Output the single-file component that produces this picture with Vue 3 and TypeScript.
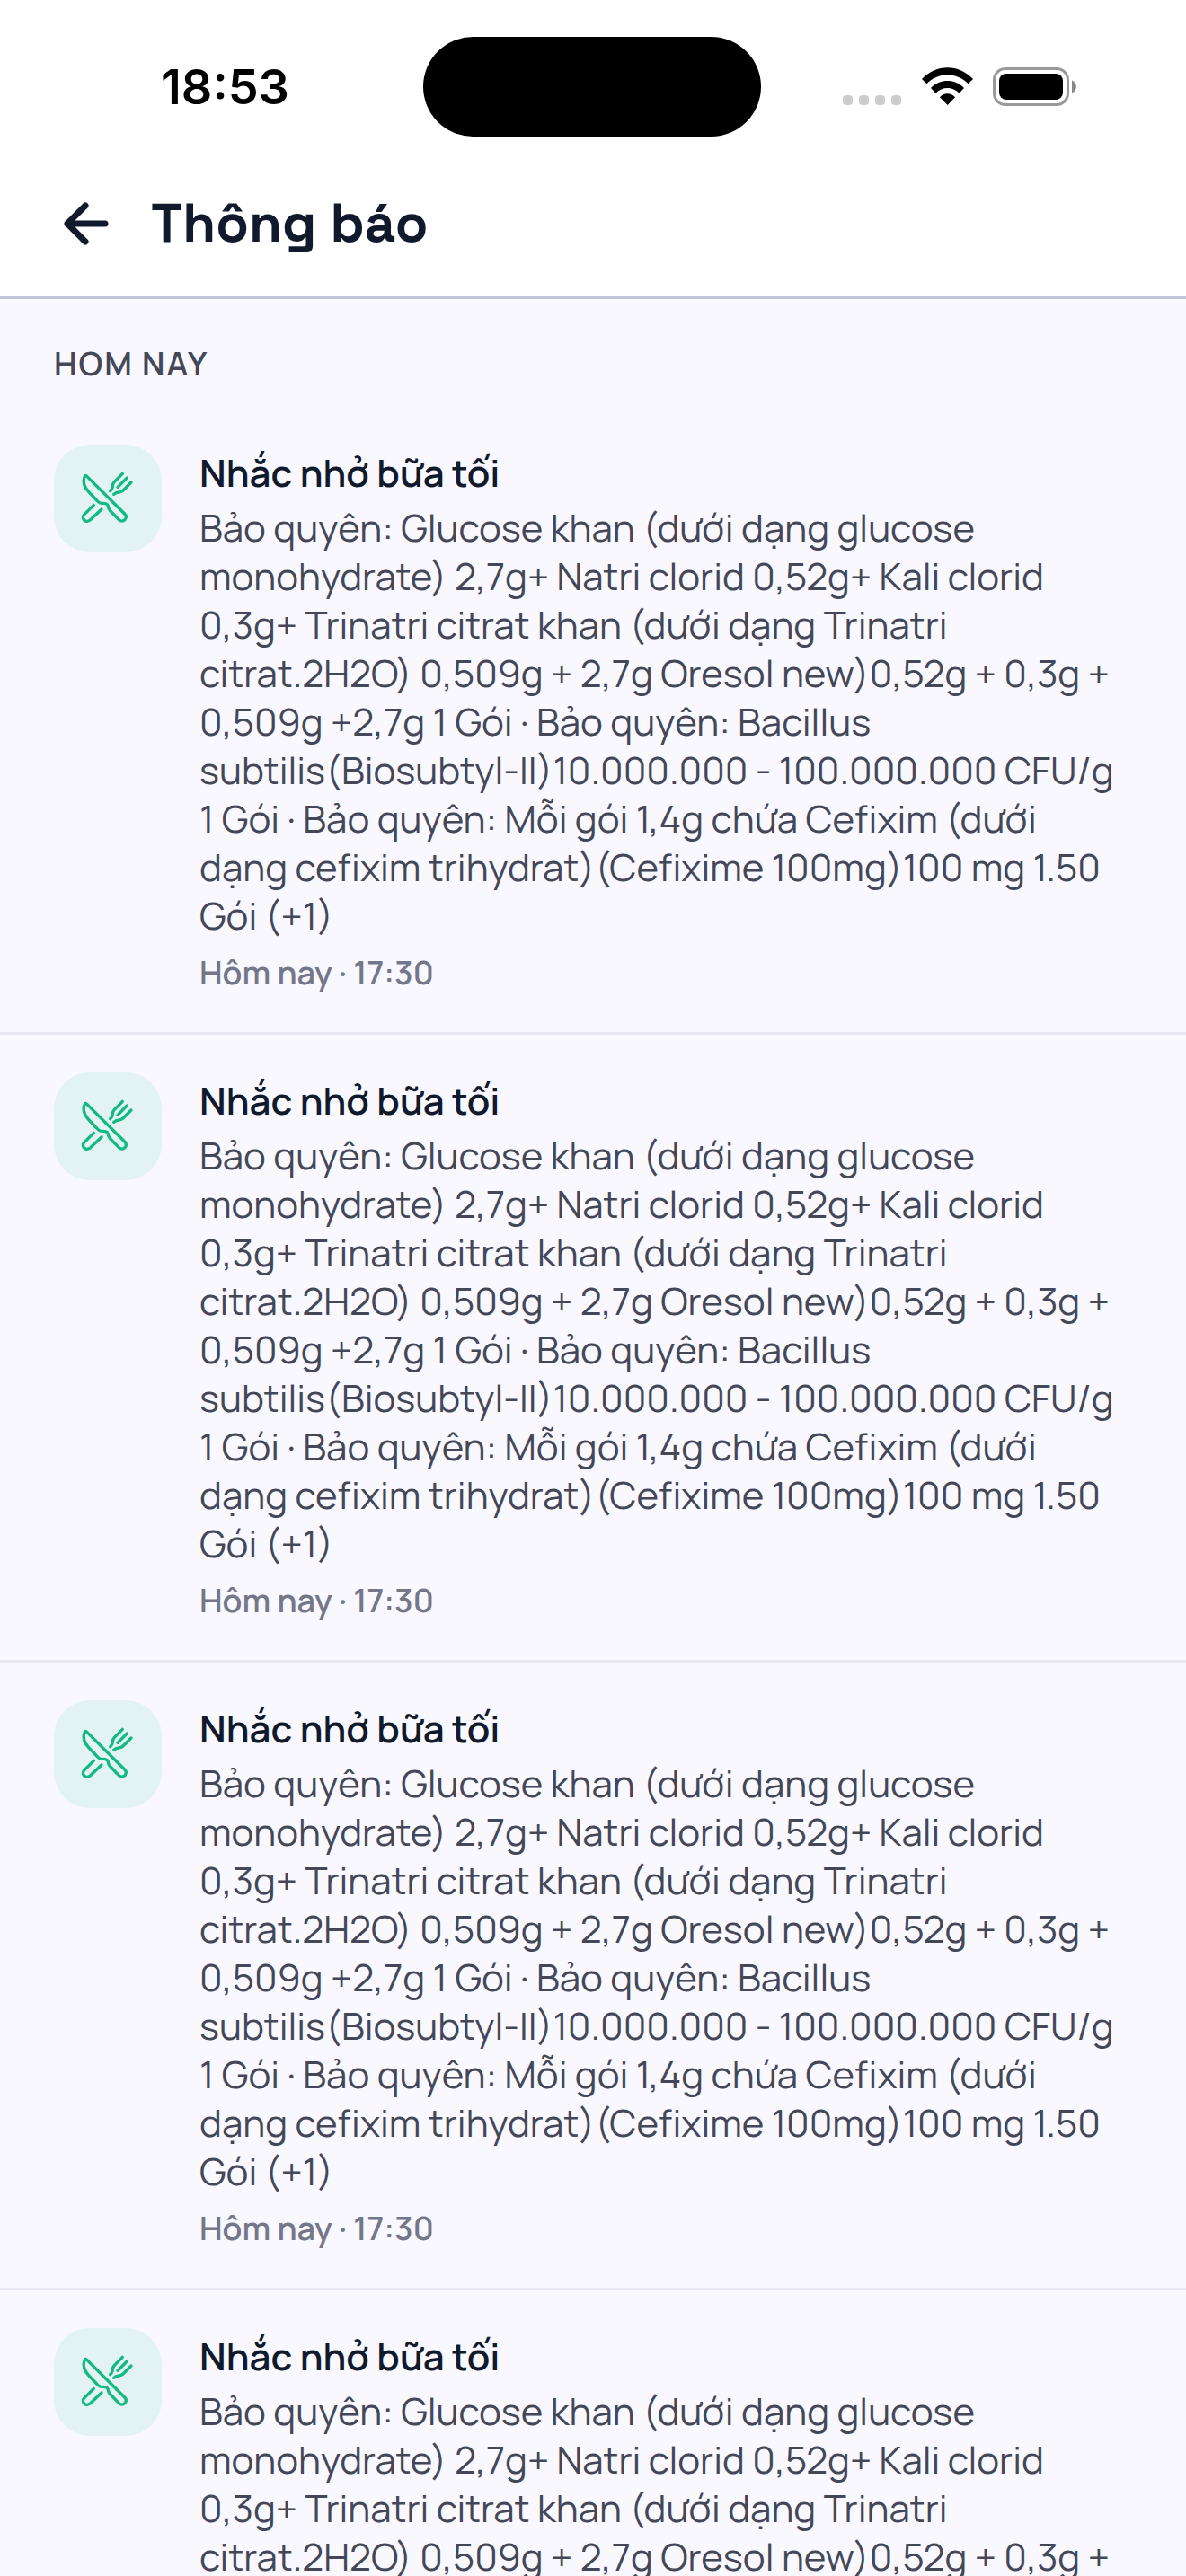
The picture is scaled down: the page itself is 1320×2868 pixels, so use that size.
<script setup lang="ts">
interface Reminder {
  id: number
  title: string
  body: string
  time: string
}

const body =
  'Bảo quyên: Glucose khan (dưới dạng glucose monohydrate) 2,7g+ Natri clorid 0,52g+ Kali clorid ' +
  '0,3g+ Trinatri citrat khan (dưới dạng Trinatri citrat.2H2O) 0,509g + 2,7g Oresol new)0,52g + 0,3g + ' +
  '0,509g +2,7g 1 Gói · Bảo quyên: Bacillus subtilis(Biosubtyl-II)10.000.000 - 100.000.000 CFU/g ' +
  '1 Gói · Bảo quyên: Mỗi gói 1,4g chứa Cefixim (dưới dạng cefixim trihydrat)(Cefixime 100mg)100 mg 1.50 ' +
  'Gói (+1)'

const reminders: Reminder[] = [1, 2, 3, 4].map((id) => ({
  id,
  title: 'Nhắc nhở bữa tối',
  body,
  time: 'Hôm nay · 17:30',
}))
</script>

<template>
  <div class="screen">
    <div class="status">
      <div class="status-side">
        <span class="clock">18:53</span>
      </div>
      <div class="island"></div>
      <div class="status-side indicators">
        <svg class="dots" viewBox="0 0 66 42" aria-hidden="true">
          <rect x="0" y="31" width="11" height="11" rx="4" />
          <rect x="18" y="31" width="11" height="11" rx="4" />
          <rect x="36" y="31" width="11" height="11" rx="4" />
          <rect x="54" y="31" width="11" height="11" rx="4" />
        </svg>
        <svg class="wifi" viewBox="0 0 171 126" aria-hidden="true">
          <path d="M0 39C48-12 123-12 171 39L155 55C117 16 54 16 16 55Z" />
          <path d="M30 69C61 37 110 37 141 69L125 86C103 63 68 63 46 86Z" />
          <path d="M60 100C74 84 97 84 111 100L86 126Z" />
        </svg>
        <svg class="battery" viewBox="0 0 93 43" aria-hidden="true">
          <rect x="1.5" y="1.5" width="82" height="40" rx="12.5" fill="none" stroke="#999" stroke-width="3" />
          <rect x="7" y="7" width="71" height="29" rx="8" />
          <path d="M88 14.500C94.500 17 94.500 26 88 28.500Z" fill="#888" />
        </svg>
      </div>
    </div>

    <header class="bar">
      <button class="back" type="button" aria-label="Quay lại">
        <svg viewBox="0 0 72 72" aria-hidden="true">
          <path d="M57 36H15M35 16L15 36L35 56" />
        </svg>
      </button>
      <h1>Thông báo</h1>
    </header>

    <main class="list">
      <h2>HOM NAY</h2>
      <article v-for="item in reminders" :key="item.id" class="item">
        <div class="tile">
          <svg viewBox="132 117 216 216" aria-hidden="true">
            <path d="M168 149L296 276C302 282 302 290 297 296C291 302 283 302 277 296L246 264C240 257 243 250 238 245C231 238 224 243 214 240C209 238 204 232 200 228L178 205C162 188 156 168 162 153C163 149 166 147 168 149Z" />
            <path d="M193 247L162 278C156 284 156 292 161 297C166 302 174 302 181 297L219 261" />
            <path d="M289 142L262 169C254 177 257 185 254 192L248 200" />
            <path d="M318 171L291 198C284 205 276 203 268 206L260 211" />
            <path d="M304 156L273 187" />
          </svg>
        </div>
        <div class="text">
          <h3>{{ item.title }}</h3>
          <p class="body">{{ item.body }}</p>
          <p class="time">{{ item.time }}</p>
        </div>
      </article>
    </main>
  </div>
</template>

<style>
body {
  margin: 0;
}
</style>

<style scoped>
.screen {
  display: flex;
  flex-direction: column;
  height: 100vh;
  overflow: hidden;
  background: #f9f8ff;
  color: #111a2d;
  font-family: Manrope, Inter, "Noto Sans", sans-serif;
}

h1,
h2,
h3,
p {
  margin: 0;
}

.status {
  display: flex;
  align-items: center;
  flex: none;
  box-sizing: border-box;
  height: 186px;
  padding-top: 7px;
  background: #fff;
}

.status-side {
  display: flex;
  flex: 1;
  justify-content: center;
  padding-left: 30px;
}

.clock {
  color: #000;
  font: 600 54px/64px Inter, sans-serif;
}

.island {
  width: 376px;
  height: 111px;
  border-radius: 56px;
  background: #000;
}

.indicators {
  gap: 22px;
  padding: 0 32px 0 0;
}

.dots {
  width: 66px;
  height: 42px;
  fill: #ccc;
}

.wifi {
  width: 57px;
  height: 42px;
}

.battery {
  width: 93px;
  height: 43px;
}

.bar {
  display: flex;
  align-items: center;
  flex: none;
  height: 126px;
  padding: 0 60px 18px;
  gap: 36px;
  background: #fff;
  border-bottom: 3px solid #c3c4d9;
}

.back {
  display: flex;
  padding: 0;
  border: 0;
  background: none;
}

.back svg {
  width: 72px;
  height: 72px;
  fill: none;
  stroke: #111a2d;
  stroke-width: 7;
  stroke-linecap: round;
  stroke-linejoin: round;
}

h1 {
  font-family: "Space Grotesk", Manrope, Inter, sans-serif;
  font-size: 60px;
  font-weight: 600;
  line-height: 72px;
}

.list {
  flex: 1;
  overflow-y: auto;
  scrollbar-width: none;
}

h2 {
  padding: 48px 60px 24px;
  color: #434758;
  font-size: 36px;
  font-weight: 600;
  line-height: 48px;
  letter-spacing: 2px;
}

.item {
  display: flex;
  gap: 42px;
  padding: 42px 60px;
  border-bottom: 3px solid #e7e6f1;
}

.tile {
  display: flex;
  align-items: center;
  justify-content: center;
  flex: none;
  width: 120px;
  height: 120px;
  border-radius: 40px;
  background: #e3f2f2;
}

.tile svg {
  width: 72px;
  height: 72px;
  fill: none;
  stroke: #12b981;
  stroke-width: 10;
  stroke-linecap: round;
  stroke-linejoin: round;
}

.text {
  flex: 1;
  min-width: 0;
}

h3 {
  font-size: 42px;
  font-weight: 600;
  line-height: 62px;
}

.body {
  margin-top: 3px;
  color: #434758;
  font-size: 42px;
  font-weight: 400;
  line-height: 54px;
}

.time {
  margin-top: 13px;
  color: #737789;
  font-size: 36px;
  font-weight: 600;
  line-height: 48px;
}
</style>
